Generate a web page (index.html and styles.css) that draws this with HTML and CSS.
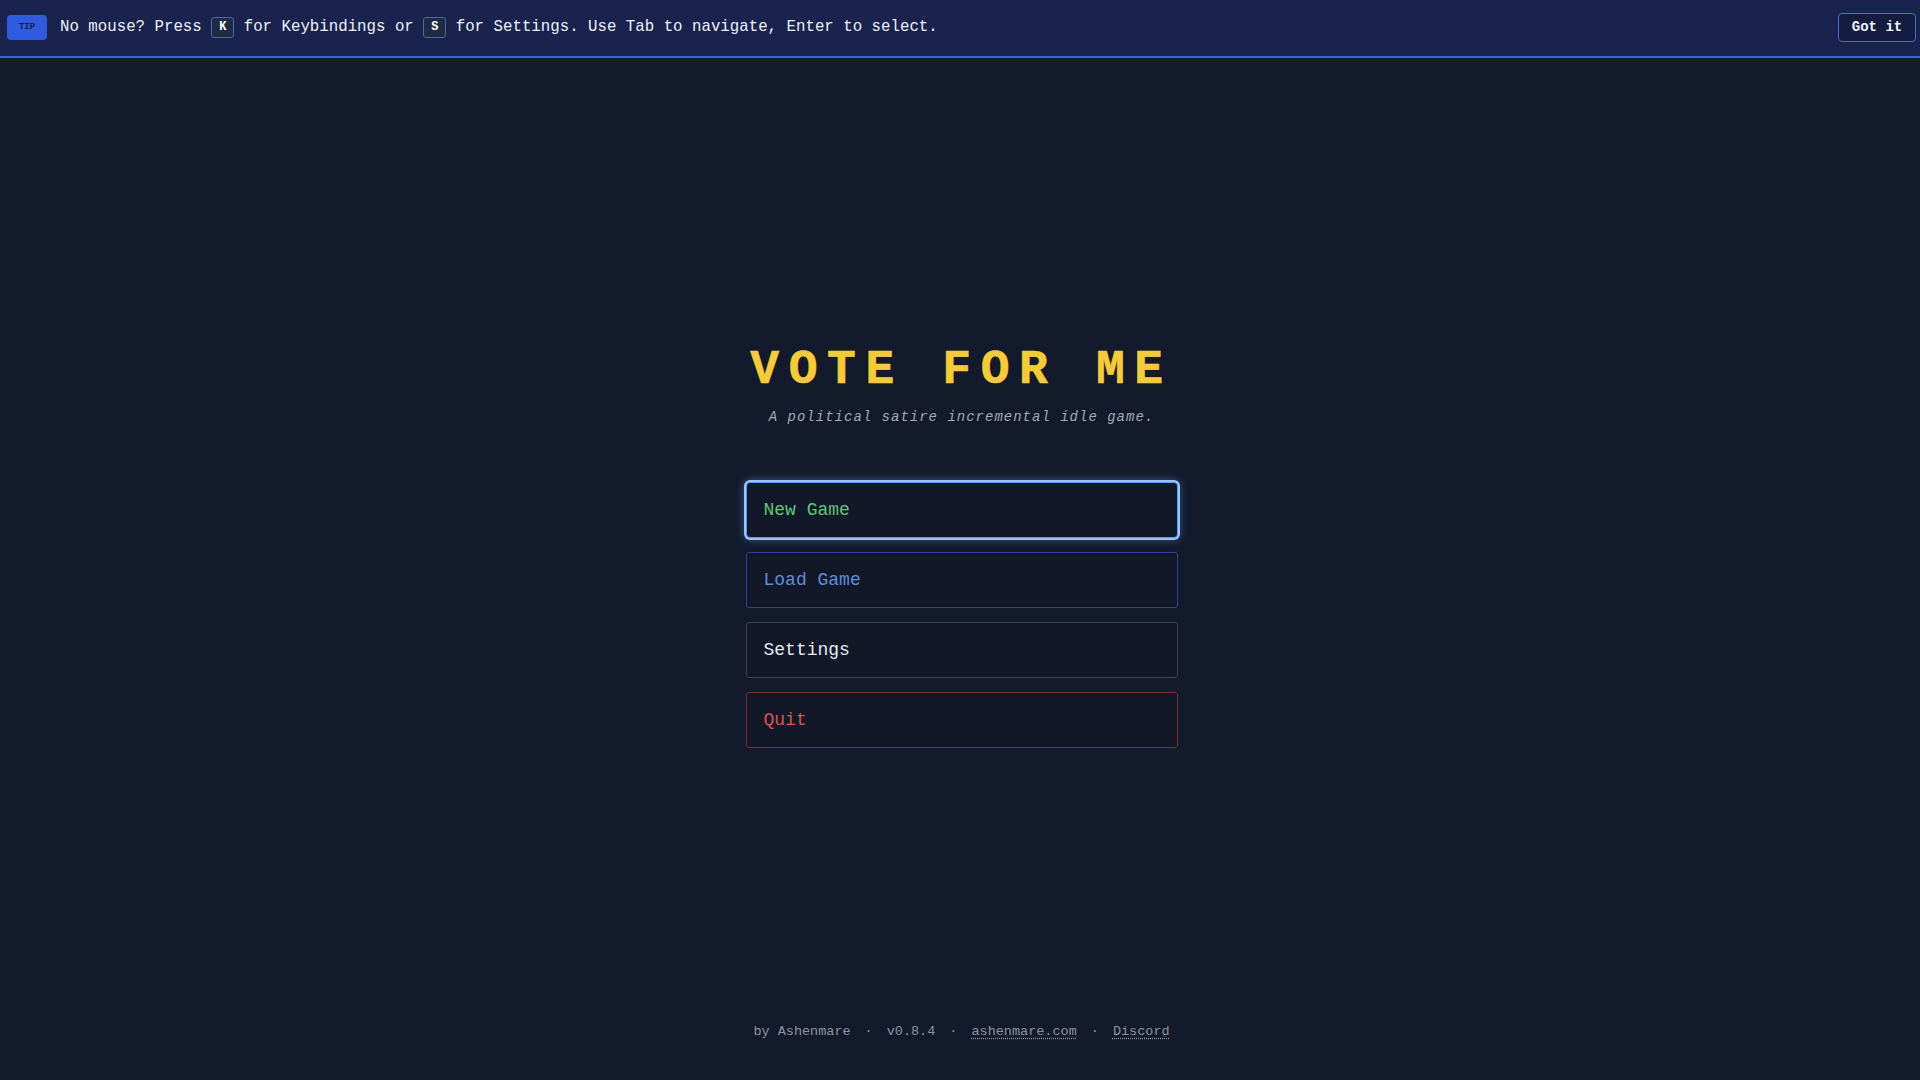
FILE: index.html
```html
<!DOCTYPE html>
<html lang="en">
<head>
    <meta charset="UTF-8">
    <meta name="viewport" content="width=device-width, initial-scale=1.0">
    <title>Vote For Me</title>
    <link rel="stylesheet" href="styles.css">
</head>
<body>

    <!-- Bandeau d'astuce clavier -->
    <div class="tip-bar">
        <span class="tip-badge">TIP</span>
        <span class="tip-text">No mouse? Press <kbd>K</kbd> for Keybindings or <kbd>S</kbd> for Settings. Use Tab to navigate, Enter to select.</span>
        <button class="tip-close">Got it</button>
    </div>

    <!-- Menu principal -->
    <main class="menu">
        <h1 class="title">VOTE FOR ME</h1>
        <p class="subtitle">A political satire incremental idle game.</p>

        <div class="menu-list">
            <button class="menu-btn new focused">New Game</button>
            <button class="menu-btn load">Load Game</button>
            <button class="menu-btn settings">Settings</button>
            <button class="menu-btn quit">Quit</button>
        </div>
    </main>

    <footer class="footer">
        <span>by Ashenmare</span>
        <span class="sep">·</span>
        <span>v0.8.4</span>
        <span class="sep">·</span>
        <a href="#">ashenmare.com</a>
        <span class="sep">·</span>
        <a href="#">Discord</a>
    </footer>

</body>
</html>
```

FILE: styles.css
```css
body {
    font-family: "Liberation Mono", "DejaVu Sans Mono", monospace;
    margin: 0;
    padding: 0;
    min-height: 100vh;
    display: flex;
    flex-direction: column;
    background-color: #131a2b;
    color: #e5e7eb;
}
.tip-bar {
    height: 56px;
    box-sizing: border-box;
    display: flex;
    align-items: center;
    padding: 0 4px 2px 7px;
    background-color: #19234d;
    border-bottom: 2px solid #3b63d8;
    height: 58px;
}
.tip-badge {
    width: 40px;
    height: 25px;
    display: flex;
    align-items: center;
    justify-content: center;
    background-color: #2f5be0;
    color: #15204a;
    border-radius: 4px;
    font-size: 9px;
    font-weight: bold;
}
.tip-text {
    margin-left: 13px;
    font-size: 15.75px;
    color: #eef1f8;
    white-space: pre;
}
kbd {
    display: inline-block;
    min-width: 11px;
    padding: 1px 5px;
    line-height: 17px;
    text-align: center;
    font-family: "Liberation Mono", monospace;
    font-size: 12px;
    font-weight: bold;
    color: #ffffff;
    background-color: #1f2b45;
    border: 1px solid #4d6a9a;
    border-radius: 3px;
    vertical-align: 1px;
}
.tip-close {
    margin-left: auto;
    width: 78px;
    height: 29px;
    font-family: "Liberation Mono", monospace;
    font-size: 14px;
    font-weight: bold;
    color: #eef1f8;
    background-color: #141c3f;
    border: 1px solid #4b6bd6;
    border-radius: 4px;
    cursor: pointer;
}
.menu {
    flex: 1;
    display: flex;
    flex-direction: column;
    align-items: center;
    justify-content: center;
    padding: 10px 0 0 3px;
}
.title {
    margin: 0;
    font-size: 48px;
    line-height: 1.2;
    letter-spacing: 0.2em;
    color: #f5cc33;
    font-weight: bold;
    -webkit-text-stroke: 0.6px #f5cc33;
}
.subtitle {
    margin: 8px 0 0;
    font-size: 14px;
    line-height: 1.4;
    letter-spacing: 1px;
    font-style: italic;
    color: #a3a9b6;
}
.menu-list {
    margin-top: 55px;
    width: 432px;
    display: flex;
    flex-direction: column;
    gap: 14px;
}
.menu-btn {
    height: 56px;
    padding: 0 17px;
    text-align: left;
    font-family: "Liberation Mono", monospace;
    font-size: 18px;
    background-color: #121827;
    border: 1px solid #374151;
    border-radius: 3px;
    cursor: pointer;
}
.menu-btn.new {
    color: #5ec77a;
}
.menu-btn.focused {
    border: 1px solid #5b9cf0;
    border-radius: 4px;
    box-shadow: 0 0 0 2px #9cc4f7, 0 0 8px 2px rgba(96, 165, 250, 0.45);
}
.menu-btn.load {
    color: #618bdc;
    border-color: #2f3f9e;
}
.menu-btn.settings {
    color: #e8eaee;
    border-color: #3a4253;
}
.menu-btn.quit {
    color: #d9534f;
    border-color: #7d2a33;
}
.footer {
    display: flex;
    justify-content: center;
    gap: 14px;
    padding: 0 0 38px 3px;
    font-size: 13.5px;
    line-height: 20px;
    color: #8d93a0;
}
.footer a {
    color: #8d93a0;
    text-decoration: underline dotted;
    text-underline-offset: 3px;
}
```
